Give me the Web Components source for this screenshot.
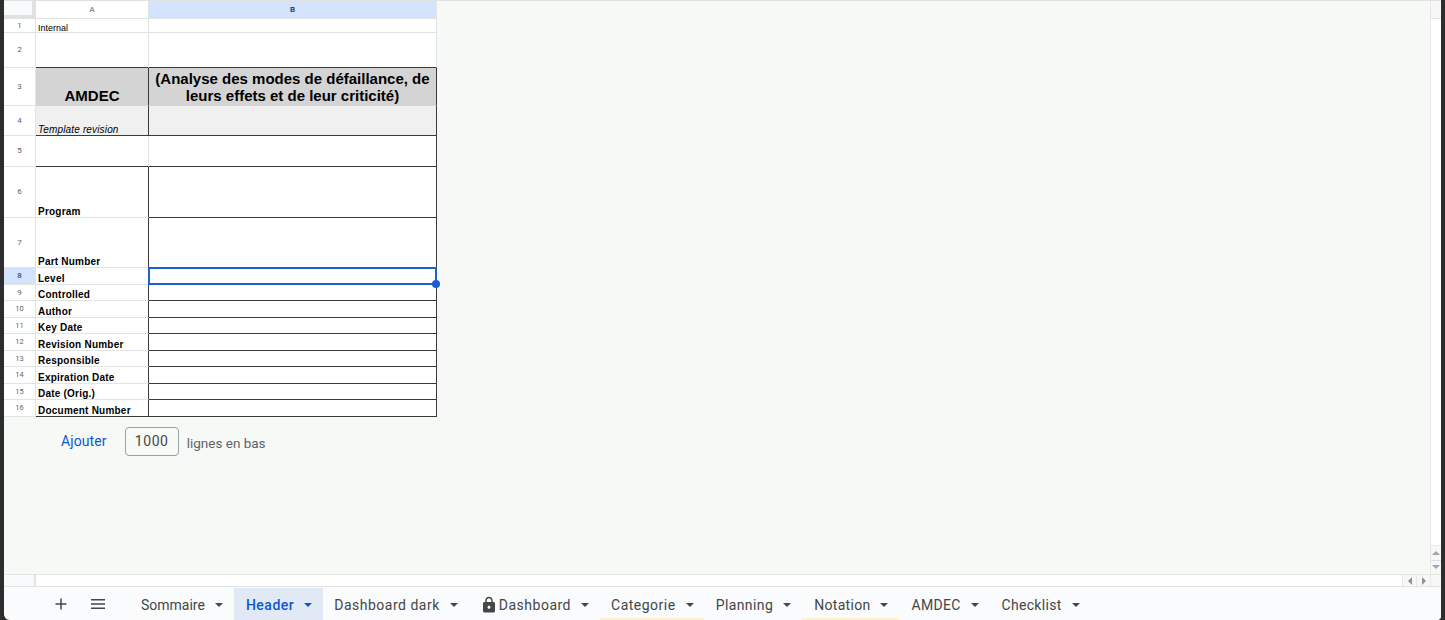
<!DOCTYPE html>
<html lang="fr"><head><meta charset="utf-8"><title>AMDEC</title>
<style>
html,body{margin:0;padding:0;height:620px;overflow:hidden;background:#2d2d2d;font-family:Roboto,"Liberation Sans",sans-serif}
</style></head><body>
<sheet-app></sheet-app>
<script>
const DARK='#3a3a3a',LIGHT='#e2e3e3';
class SheetGrid extends HTMLElement{
  connectedCallback(){
    const rows=[14,35,38,30,31,51,50,17,16,17,16,17,16,17,16,17];
    const s=this.attachShadow({mode:'open'});
    const lab=['Level','Controlled','Author','Key Date','Revision Number','Responsible','Expiration Date','Date (Orig.)','Document Number'];
    const spec={
      1:{a:'Internal',ac:'tiny'},
      2:{ab:1,bb:1},
      3:{a:'AMDEC',ac:'big',b:'(Analyse des modes de défaillance, de leurs effets et de leur criticité)',bc:'big title',bg:'g1',ar:1,br:1},
      4:{a:'Template revision',ac:'ital',bg:'g2',ar:1,br:1,ab:1,bb:1},
      5:{br:1,ab:1,bb:1},
      6:{a:'Program',ac:'bold',ar:1,br:1,bb:1},
      7:{a:'Part Number',ac:'bold',ar:1,br:1}
    };
    lab.forEach((t,i)=>spec[8+i]={a:t,ac:'bold',ar:1,br:1,bb:1,ab:i==8});
    let h='<div class="corner"></div><div class="ch">A</div><div class="ch sel">B</div>';
    rows.forEach((_,i)=>{
      const n=i+1,o=spec[n];
      h+=`<div class="rh${n==8?' sel':''}${n>=10?' sm':''}">${n}</div>`;
      h+=`<div class="c ${o.ac||''} ${o.bg||''}${o.ar?' rd':''}${o.ab?' bd':''}"><span>${o.a||''}</span></div>`;
      h+=`<div class="c ${o.bc||''} ${o.bg||''}${o.br?' rd':''}${o.bb?' bd':''}"><span>${o.b||''}</span></div>`;
    });
    s.innerHTML=`<style>
      :host{display:grid;position:relative;width:433px;grid-template-columns:32px 113px 288px;
        grid-template-rows:18px ${rows.map(r=>r+'px').join(' ')};font-family:"Liberation Sans",Arial,sans-serif;color:#000}
      div{box-sizing:border-box}
      .corner{background:#f8f9fa;border-right:4px solid #dfe1e3;border-bottom:4px solid #dfe1e3}
      .ch{background:#fff;border-right:1px solid ${LIGHT};border-bottom:1px solid ${LIGHT};display:flex;align-items:center;justify-content:center;font:8px Roboto,sans-serif;color:#5f6368}
      .ch.sel{background:#d3e3fd;color:#0b2a5c;font-weight:500}
      .rh{background:#fff;border-right:1px solid ${LIGHT};border-bottom:1px solid ${LIGHT};display:flex;justify-content:center;align-items:center;font:8px/1 Roboto,sans-serif;color:#5f6368}
      .rh.sel{background:#d3e3fd;color:#0b2a5c}
      .rh.sm{font-size:7.5px}
      .c{background:#fff;border-right:1px solid ${LIGHT};border-bottom:1px solid ${LIGHT};display:flex;align-items:flex-end;padding:0 3px 0 2px;font-size:10px;line-height:11px;white-space:nowrap;overflow:hidden}
      .c.rd{border-right-color:${DARK}}
      .c.bd{border-bottom-color:${DARK}}
      .g1{background:#d4d4d4;border-bottom-color:#d4d4d4}
      .g2{background:#f0f0f0}
      .tiny{font-size:9px;line-height:8px}
      .bold{font-weight:700;letter-spacing:.22px;line-height:10px}
      .ital{font-style:italic;letter-spacing:.15px}
      .big{font-weight:700;font-size:15px;line-height:17px;justify-content:center;text-align:center;white-space:normal;padding:0 2px 1px}
      .title span{display:block;width:280px}
      .selbox{position:absolute;left:144px;top:266px;width:289px;height:18px;border:2px solid #1a5fd0;pointer-events:none}
      .handle{position:absolute;left:428px;top:279px;width:8px;height:8px;border-radius:50%;background:#1a5fd0;pointer-events:none}
    </style>${h}<div class="selbox"></div><div class="handle"></div>`;
  }
}
class AddRows extends HTMLElement{
  connectedCallback(){
    this.attachShadow({mode:'open'}).innerHTML=`<style>
      :host{display:flex;align-items:center;height:29px;margin-top:10px;padding-left:53px;font:14px Roboto,sans-serif;color:#5f6368}
      .add{color:#0b57d0;padding:0 4px;letter-spacing:.1px;margin-top:-1px}
      .inp{box-sizing:border-box;width:54px;height:29px;margin-left:14px;border:1px solid #9aa0a6;border-radius:4px;display:flex;align-items:center;justify-content:center;color:#444746;padding-bottom:1px;letter-spacing:.6px}
      .lbl{margin-left:8px;margin-top:2px;font-size:13.5px}
    </style><span class="add">Ajouter</span><span class="inp">1000</span><span class="lbl">lignes en bas</span>`;
  }
}
class VScroll extends HTMLElement{
  connectedCallback(){
    this.attachShadow({mode:'open'}).innerHTML=`<style>
      :host{display:flex;flex-direction:column;width:11px;flex:none;box-sizing:border-box;border-left:1px solid #e6e7e7;background:#fff}
      .top{height:18px;background:#f6f7f6;border-bottom:1px solid #e3e4e4;box-sizing:border-box}
      .track{flex:1;background:#fff}
      .btns{height:29px;background:#f6f7f6;display:flex;flex-direction:column;border-top:1px solid #ececec;box-sizing:border-box}
      .b{flex:1;display:flex;align-items:center;justify-content:center}
      .b:first-child{border-bottom:1px solid #d5dcf2}
      .up{border:4px solid transparent;border-top:0;border-bottom:4px solid #a3a6a8}
      .dn{border:4px solid transparent;border-bottom:0;border-top:4px solid #a3a6a8}
    </style><div class="top"></div><div class="track"></div><div class="btns"><div class="b"><i class="up"></i></div><div class="b"><i class="dn"></i></div></div>`;
  }
}
class HScroll extends HTMLElement{
  connectedCallback(){
    this.attachShadow({mode:'open'}).innerHTML=`<style>
      :host{display:flex;height:13px;flex:none;box-sizing:border-box;border-top:1px solid #e3e4e4;border-bottom:1px solid #e3e4e4;background:#fff}
      .hd{width:32px;background:#f8f9fa;border-right:2px solid #e3e4e4;box-sizing:border-box}
      .tr{flex:1}
      .b{width:14px;background:#f6f7f6;display:flex;align-items:center;justify-content:center;border-left:1px solid #e6e7e7;box-sizing:border-box}
      .end{width:10px;background:#f6f7f6;border-left:1px solid #e6e7e7}
      .l{border:4px solid transparent;border-left:0;border-right:4px solid #8f9294}
      .r{border:4px solid transparent;border-right:0;border-left:4px solid #8f9294}
    </style><div class="hd"></div><div class="tr"></div><div class="b"><i class="l"></i></div><div class="b"><i class="r"></i></div><div class="end"></div>`;
  }
}
class SheetTab extends HTMLElement{
  connectedCallback(){
    const act=this.hasAttribute('active'),line=this.hasAttribute('mark'),lock=this.hasAttribute('lock');
    const col=act?'#0b57d0':'#444746';
    this.attachShadow({mode:'open'}).innerHTML=`<style>
      :host{display:flex;align-items:center;box-sizing:border-box;height:32px;padding:2px ${this.getAttribute('pr')||10}px 0 ${this.getAttribute('pl')||12}px;color:${col};font:${act?500:400} 14px Roboto,sans-serif;letter-spacing:${this.getAttribute('ls')||.5}px;background:${act?'#e1e9f7':'transparent'};position:relative;white-space:nowrap;flex:none}
      .arrow{width:0;height:0;border:4px solid transparent;border-bottom:0;border-top:4px solid ${col};margin-left:10px;margin-right:1px}
      svg{width:18px;height:18px;fill:#444746;margin-right:1px;margin-left:-1px}
      .mark{position:absolute;left:0;right:0;bottom:0;height:2px;background:#fff2cc}
    </style>${lock?'<svg viewBox="0 0 24 24"><path d="M18 8h-1V6c0-2.76-2.24-5-5-5S7 3.24 7 6v2H6c-1.1 0-2 .9-2 2v10c0 1.1.9 2 2 2h12c1.1 0 2-.9 2-2V10c0-1.1-.9-2-2-2zm-6 9c-1.1 0-2-.9-2-2s.9-2 2-2 2 .9 2 2-.9 2-2 2zm3.1-9H8.9V6c0-1.71 1.39-3.1 3.1-3.1 1.71 0 3.1 1.39 3.1 3.1v2z"/></svg>':''}<span><slot></slot></span><i class="arrow"></i>${line?'<i class="mark"></i>':''}`;
  }
}
class TabBar extends HTMLElement{
  connectedCallback(){
    this.attachShadow({mode:'open'}).innerHTML=`<style>
      :host{display:flex;align-items:flex-end;flex:none;height:33px;background:#f9fbfd;padding-left:125px;position:relative;border-bottom-left-radius:6px;border-bottom-right-radius:4px}
      .tools{position:absolute;left:0;top:0;height:33px;width:125px}
      svg{position:absolute;top:8px;width:18px;height:18px;fill:#444746}
    </style><div class="tools">
      <svg style="left:48px" viewBox="0 0 18 18"><path d="M8.25 3.5h1.5v4.75h4.75v1.5H9.75v4.75h-1.5V9.75H3.5v-1.5h4.75z"/></svg>
      <svg style="left:85px" viewBox="0 0 18 18"><path d="M2 4h14v1.5H2zM2 8.25h14v1.5H2zM2 12.5h14V14H2z"/></svg>
    </div><slot></slot>`;
  }
}
class SheetApp extends HTMLElement{
  connectedCallback(){
    this.attachShadow({mode:'open'}).innerHTML=`<style>
      :host{display:flex;flex-direction:column;box-sizing:border-box;height:620px;margin:0 4px 0 4px;background:#f7f9f6;border-top:1px solid #e0e2e2;border-bottom-left-radius:6px;border-bottom-right-radius:4px;overflow:hidden}
      .main{flex:1;display:flex;min-height:0}
      .area{flex:1;min-width:0}
    </style><div class="main"><div class="area"><sheet-grid></sheet-grid><add-rows></add-rows></div><v-scroll></v-scroll></div><h-scroll></h-scroll>
    <tab-bar>
      <sheet-tab ls="0">Sommaire</sheet-tab><sheet-tab active>Header</sheet-tab><sheet-tab pl="11">Dashboard dark</sheet-tab><sheet-tab lock>Dashboard</sheet-tab><sheet-tab mark pl="11" pr="9">Categorie</sheet-tab><sheet-tab ls=".4">Planning</sheet-tab><sheet-tab mark ls=".3">Notation</sheet-tab><sheet-tab ls=".3">AMDEC</sheet-tab><sheet-tab ls=".3">Checklist</sheet-tab>
    </tab-bar>`;
  }
}
customElements.define('sheet-grid',SheetGrid);
customElements.define('add-rows',AddRows);
customElements.define('v-scroll',VScroll);
customElements.define('h-scroll',HScroll);
customElements.define('sheet-tab',SheetTab);
customElements.define('tab-bar',TabBar);
customElements.define('sheet-app',SheetApp);
</script></body></html>
